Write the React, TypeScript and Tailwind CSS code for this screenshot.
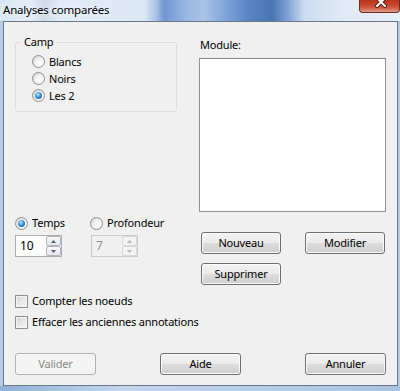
import React from 'react'
import clsx from 'clsx'

const Radio = ({ checked = false, label, className }: { checked?: boolean; label: string; className?: string }) => (
  <label className={clsx('flex items-center gap-[4px] whitespace-nowrap', className)}>
    <span className="flex h-[13px] w-[13px] shrink-0 items-center justify-center rounded-full border border-[#8e8f8f] bg-[radial-gradient(circle_at_65%_65%,#ffffff_0%,#f2f2f2_45%,#cbcbcb_100%)]">
      {checked && (
        <span className="h-[7px] w-[7px] rounded-full bg-[radial-gradient(circle_at_40%_35%,#b8e8ff_0%,#3b95da_45%,#0c407d_100%)]" />
      )}
    </span>
    <span>{label}</span>
  </label>
)

const Check = ({ label, className }: { label: string; className?: string }) => (
  <label className={clsx('flex h-[16px] items-center gap-[4px] whitespace-nowrap', className)}>
    <span className="h-[13px] w-[13px] shrink-0 border border-[#8e8f8f] bg-[linear-gradient(135deg,#cfd2d6_0%,#e8e9ea_55%,#f7f7f7_100%)] shadow-[inset_0_0_0_1px_#f4f4f4]" />
    <span>{label}</span>
  </label>
)

const Arrow = ({ up = false, disabled = false }: { up?: boolean; disabled?: boolean }) => (
  <svg width="5" height="3" viewBox="0 0 5 3">
    <path d={up ? 'M0 3 L2.5 0 L5 3 Z' : 'M0 0 L2.5 3 L5 0 Z'} fill={disabled ? '#b4b7bb' : '#4d6185'} />
  </svg>
)

const Spin = ({ value, disabled = false }: { value: string; disabled?: boolean }) => (
  <div
    className={clsx(
      'flex h-[22px] w-[47px] border',
      disabled ? 'border-[#c8cacf] bg-[#f0f0f0] text-[#8d8d8d]' : 'border-[#abadb3] bg-white text-black'
    )}
  >
    <span className="flex-1 pl-[4px] text-[12px] leading-[20px]">{value}</span>
    <div className="flex w-[15px] flex-col">
      {[true, false].map((up) => (
        <span
          key={String(up)}
          className={clsx(
            'flex h-[10px] items-center justify-center rounded-[2px] border',
            disabled
              ? 'border-[#d5d7da] bg-[#f2f2f2]'
              : 'border-[#b2b5ba] bg-[linear-gradient(to_bottom,#f8f8f8,#e4e6e9)]'
          )}
        >
          <Arrow up={up} disabled={disabled} />
        </span>
      ))}
    </div>
  </div>
)

const Btn = ({ children, disabled = false, className }: { children: React.ReactNode; disabled?: boolean; className?: string }) => (
  <button
    className={clsx(
      'h-[22px] rounded-[3px] border text-[11px] leading-[20px] tracking-[-0.2px]',
      disabled
        ? 'border-[#adb2b5] bg-[#f4f4f4] text-[#8a8a8a]'
        : 'border-[#707070] bg-[linear-gradient(to_bottom,#f2f2f2_0%,#ebebeb_50%,#dddddd_50%,#cfcfcf_100%)] text-black shadow-[inset_0_0_0_1px_#fbfbfb]',
      className
    )}
  >
    {children}
  </button>
)

export default function App() {
  return (
    <div className="flex h-[391px] w-[400px] flex-col overflow-hidden bg-[#b3cbe5] font-['Noto_Sans',sans-serif] text-[11px] leading-[16px] tracking-[-0.2px] text-black">
      {/* title bar */}
      <div className="flex h-[21px] shrink-0 items-start bg-[linear-gradient(to_right,#d9e6f4_0%,#e4edf7_8%,#cfdae7_11%,#e2ecf6_15%,#dce8f4_36%,#a9c2e6_39%,#6f97d3_41%,#9cb9e3_47%,#a9c3e7_51%,#7aa1d8_57%,#5a85c4_62%,#4a75b3_68%,#7ea3d6_72%,#cadcf0_76%,#dfe9f5_85%,#e7eff8_100%)]">
        <span className="pl-[3px] pt-[2px] text-[11.5px] [text-shadow:0_0_6px_#ffffff]">Analyses comparées</span>
        <div className="relative ml-auto h-[13px] w-[41px] overflow-hidden rounded-b-[4px] border border-t-0 border-[#6e2a1f] bg-[linear-gradient(to_bottom,#b8341d_0%,#c9472e_45%,#d1644c_70%,#e0a08c_100%)]">
          <svg className="absolute left-[15px] top-[-4px]" width="12" height="12" viewBox="0 0 12 12">
            <path d="M2 2 L10 10 M10 2 L2 10" stroke="#5a2117" strokeWidth="4" strokeLinecap="round" />
            <path d="M2 2 L10 10 M10 2 L2 10" stroke="#ffffff" strokeWidth="2" strokeLinecap="round" />
          </svg>
        </div>
      </div>

      {/* client area */}
      <div className="ml-[3px] mr-[2px] flex h-[365px] shrink-0 flex-col border border-[#6b7888] bg-[#f0f0f0] px-[11px] pt-[12px]">
        <div className="flex">
          <div className="flex min-w-0 flex-1 flex-col">
            <fieldset className="w-[162px] rounded-[3px] border border-[#d5dfe5] p-0">
              <legend className="ml-[5px] px-[3px] leading-[16px]">Camp</legend>
              <div className="flex flex-col px-[16px] pb-[7px] pt-[3px]">
                <Radio label="Blancs" className="h-[17px]" />
                <Radio label="Noirs" className="h-[17px]" />
                <Radio label="Les 2" checked className="h-[17px]" />
              </div>
            </fieldset>

            <div className="mt-[103px] flex h-[16px] items-center">
              <Radio label="Temps" checked className="w-[75px]" />
              <Radio label="Profondeur" />
            </div>
            <div className="mt-[4px] flex gap-[29px]">
              <Spin value="10" />
              <Spin value="7" disabled />
            </div>

            <Check label="Compter les noeuds" className="mt-[36px]" />
            <Check label="Effacer les anciennes annotations" className="mt-[5px]" />
          </div>

          <div className="flex w-[187px] shrink-0 flex-col">
            <span className="mt-[3px] pl-[1px]">Module:</span>
            <div className="mt-[5px] h-[154px] border border-[#8e9399] border-t-[#7f848a] bg-white" />
            <div className="mt-[20px] flex justify-between pl-[2px] pr-[1px]">
              <Btn className="w-[80px]">Nouveau</Btn>
              <Btn className="w-[80px]">Modifier</Btn>
            </div>
            <Btn className="ml-[2px] mt-[9px] w-[80px]">Supprimer</Btn>
          </div>
        </div>

        <div className="mt-[23px] flex justify-between">
          <Btn disabled className="w-[81px]">Valider</Btn>
          <Btn className="w-[81px]">Aide</Btn>
          <Btn className="w-[81px]">Annuler</Btn>
        </div>
      </div>

      <div className="flex-1 bg-[linear-gradient(to_right,#8fb0d6,#c3d6ec_30%,#b6cce6_70%,#a8c1df)]" />
    </div>
  )
}
